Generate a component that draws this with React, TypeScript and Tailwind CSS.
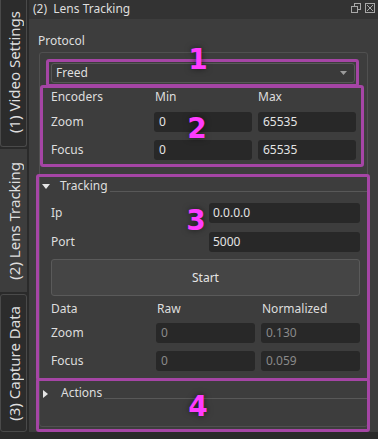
import React from "react";

function Field({ value, disabled, className }: { value: string; disabled?: boolean; className?: string }) {
  return (
    <div
      className={`flex h-[20px] items-center rounded-[3px] bg-[#282828] px-[5px] ${
        disabled ? "text-[#8a8a8a]" : "text-[#e4e4e4]"
      } ${className ?? ""}`}>
      {value}
    </div>
  );
}

function Tab({ label, active, className }: { label: string; active?: boolean; className: string }) {
  return (
    <div
      className={`flex w-[27px] items-center justify-center ${
        active ? "bg-[#3d3d3d]" : "border border-[#4a4a4a] bg-[#2c2c2c]"
      } ${className}`}>
      <span className="rotate-180 whitespace-nowrap text-[15px] leading-[20px] [writing-mode:vertical-rl]">{label}</span>
    </div>
  );
}

function Header({ label, open }: { label: string; open?: boolean }) {
  return (
    <div className="flex h-[16px]">
      {open ? (
        <svg width="8" height="5" className="ml-[2px] mt-[6px]">
          <path d="M0 0H8L4 5Z" fill="#e6e6e6" />
        </svg>
      ) : (
        <svg width="5" height="8" className="ml-[3px] mt-[5px] mr-[3px]">
          <path d="M0 0V8L5 4Z" fill="#e6e6e6" />
        </svg>
      )}
      <span className="ml-[10px]">{label}</span>
      <div className="ml-[2px] mt-[13px] h-px flex-1 bg-[#585858]" />
    </div>
  );
}

const marks = [
  { n: "1", box: "left-[46px] top-[59px] w-[313px] h-[28px]", num: "left-[178px] top-[46px]" },
  { n: "2", box: "left-[40px] top-[85px] w-[324px] h-[82px]", num: "left-[177px] top-[115px]" },
  { n: "3", box: "left-[36px] top-[174px] w-[334px] h-[207px]", num: "left-[176px] top-[207px]" },
  { n: "4", box: "left-[36px] top-[378px] w-[334px] h-[54px]", num: "left-[178px] top-[393px]" },
];

export default function App() {
  return (
    <div className="relative flex h-[439px] w-[378px] overflow-hidden bg-[#2a2a2a] font-['Noto_Sans',sans-serif] text-[12px] leading-4 text-[#dedede]">
      {/* side tabs */}
      <div className="flex w-[27px] flex-col">
        <Tab label="(1) Video Settings" className="-mt-[2px] h-[149px] rounded-b-[3px] border-t-0" />
        <Tab label="(2) Lens Tracking" active className="mt-[2px] h-[143px]" />
        <Tab label="(3) Capture Data" className="mt-[2px] h-[138px] rounded-[3px]" />
      </div>

      <div className="ml-[2px] flex w-[349px] flex-col">
        {/* title bar */}
        <div className="flex h-[19px] items-start bg-[#333333]">
          <span className="ml-[4px] mt-[1px] whitespace-pre">(2)  Lens Tracking</span>
          <svg width="10" height="10" className="ml-auto mt-[3px]" fill="none" stroke="#a8a8a8">
            <rect x="3.5" y="0.5" width="6" height="6" />
            <rect x="0.5" y="3.5" width="6" height="6" fill="#333333" />
          </svg>
          <svg width="10" height="10" className="ml-[4px] mr-[3px] mt-[3px]" fill="none" stroke="#a8a8a8">
            <rect x="0.5" y="0.5" width="9" height="9" />
            <path d="M2 2L8 8M8 2L2 8" />
          </svg>
        </div>

        {/* body */}
        <div className="flex h-[413px] flex-col bg-[#3d3d3d]">
          <div className="ml-[9px] mt-[14px]">Protocol</div>
          <div className="ml-[10px] mt-[3px] flex h-[375px] w-[329px] flex-col rounded-[3px] border border-[#505050]">
            <div className="ml-[11px] mt-[10px] flex h-[20px] w-[304px] items-center justify-between rounded-[3px] border border-[#575757] bg-[#3a3a3a] pl-[4px] pr-[7px]">
              <span>Freed</span>
              <svg width="7" height="4">
                <path d="M0 0H7L3.5 4Z" fill="#9c9c9c" />
              </svg>
            </div>

            <div className="ml-[11px] mt-[6px] grid w-[305px] grid-cols-[97px_98px_98px] gap-x-[6px]">
              <span>Encoders</span>
              <span className="pl-px">Min</span>
              <span>Max</span>
            </div>
            <div className="ml-[11px] mt-[7px] grid w-[305px] grid-cols-[97px_98px_98px] items-center gap-x-[6px]">
              <span>Zoom</span>
              <Field value="0" />
              <Field value="65535" />
            </div>
            <div className="ml-[11px] mt-[8px] grid w-[305px] grid-cols-[97px_98px_98px] items-center gap-x-[6px]">
              <span>Focus</span>
              <Field value="0" />
              <Field value="65535" />
            </div>

            <div className="mt-[18px]">
              <Header label="Tracking" open />
            </div>
            <div className="ml-[11px] mt-[9px] flex items-center">
              <span className="w-[158px]">Ip</span>
              <Field value="0.0.0.0" className="w-[151px] pl-[4px]" />
            </div>
            <div className="ml-[11px] mt-[9px] flex items-center">
              <span className="w-[158px]">Port</span>
              <Field value="5000" className="w-[151px] pl-[4px]" />
            </div>
            <button className="ml-[11px] mt-[7px] h-[37px] w-[309px] rounded-[3px] border border-[#5a5a5a] bg-[#454545] text-[#e4e4e4]">
              Start
            </button>

            <div className="ml-[11px] mt-[5px] grid w-[309px] grid-cols-[99px_99px_99px] gap-x-[6px]">
              <span>Data</span>
              <span className="pl-px">Raw</span>
              <span className="pl-px">Normalized</span>
            </div>
            <div className="ml-[11px] mt-[6px] grid w-[309px] grid-cols-[99px_99px_99px] items-center gap-x-[6px]">
              <span>Zoom</span>
              <Field value="0" disabled />
              <Field value="0.130" disabled />
            </div>
            <div className="ml-[11px] mt-[8px] grid w-[309px] grid-cols-[99px_99px_99px] items-center gap-x-[6px]">
              <span>Focus</span>
              <Field value="0" disabled />
              <Field value="0.059" disabled />
            </div>

            <div className="mt-[14px]">
              <Header label="Actions" />
            </div>
          </div>
        </div>
      </div>

      {/* annotation overlay */}
      {marks.map((m) => (
        <React.Fragment key={m.n}>
          <div className={`pointer-events-none absolute rounded-[3px] border-[3px] border-[#a545a5] ${m.box}`} />
          <div
            className={`pointer-events-none absolute w-[40px] text-center font-['DejaVu_Sans',sans-serif] text-[28px] font-bold leading-[28px] text-[#ff3cff] [text-shadow:0_0_6px_rgba(0,0,0,0.55)] ${m.num}`}>
            {m.n}
          </div>
        </React.Fragment>
      ))}
    </div>
  );
}
